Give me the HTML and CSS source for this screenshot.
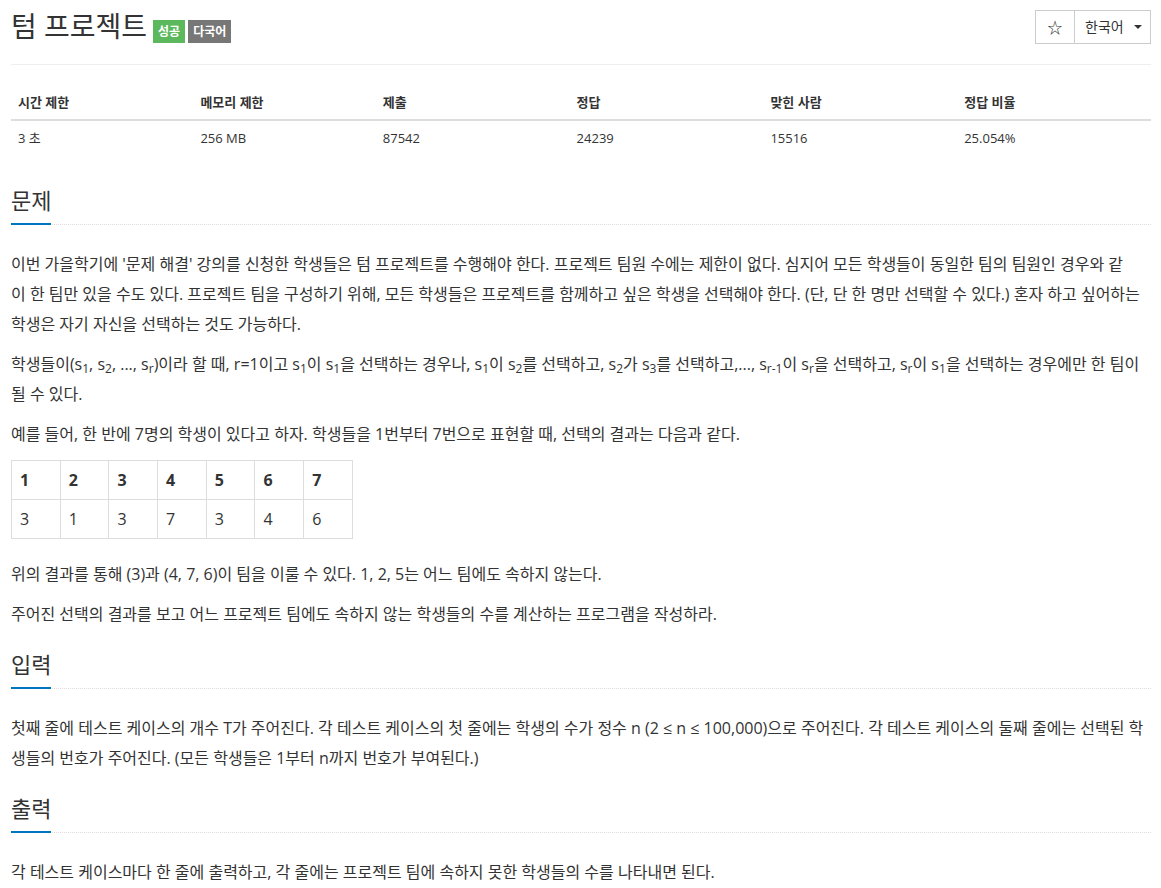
FILE: index.html
```html
<!DOCTYPE html>
<html lang="ko">
<head>
<meta charset="utf-8">
<title>텀 프로젝트</title>
<link rel="stylesheet" href="styles.css">
</head>
<body>
<div class="page">
  <div class="page-header">
    <h1 class="title">텀 프로젝트 <span class="label label-success">성공</span><span class="label label-default">다국어</span></h1>
    <div class="btn-group">
      <div class="btn btn-star">☆</div>
      <div class="btn btn-lang">한국어 <span class="caret"></span></div>
    </div>
  </div>

  <table class="stats">
    <thead>
      <tr><th class="c1">시간 제한</th><th class="c1">메모리 제한</th><th class="c2">제출</th><th class="c2">정답</th><th class="c2">맞힌 사람</th><th>정답 비율</th></tr>
    </thead>
    <tbody>
      <tr><td>3 초 </td><td>256 MB</td><td>87542</td><td>24239</td><td>15516</td><td>25.054%</td></tr>
    </tbody>
  </table>

  <section class="section">
    <div class="headline"><h2>문제</h2></div>
    <div class="text">
      <p>이번 가을학기에 '문제 해결' 강의를 신청한 학생들은 텀 프로젝트를 수행해야 한다. 프로젝트 팀원 수에는 제한이 없다. 심지어 모든 학생들이 동일한 팀의 팀원인 경우와 같<br>이 한 팀만 있을 수도 있다. 프로젝트 팀을 구성하기 위해, 모든 학생들은 프로젝트를 함께하고 싶은 학생을 선택해야 한다. (단, 단 한 명만 선택할 수 있다.) 혼자 하고 싶어하는 학생은 자기 자신을 선택하는 것도 가능하다.</p>
      <p>학생들이(s<sub>1</sub>, s<sub>2</sub>, ..., s<sub>r</sub>)이라 할 때, r=1이고 s<sub>1</sub>이 s<sub>1</sub>을 선택하는 경우나, s<sub>1</sub>이 s<sub>2</sub>를 선택하고, s<sub>2</sub>가 s<sub>3</sub>를 선택하고,..., s<sub>r-1</sub>이 s<sub>r</sub>을 선택하고, s<sub>r</sub>이 s<sub>1</sub>을 선택하는 경우에만 한 팀이 될 수 있다.</p>
      <p>예를 들어, 한 반에 7명의 학생이 있다고 하자. 학생들을 1번부터 7번으로 표현할 때, 선택의 결과는 다음과 같다.</p>
      <table class="grid">
        <thead>
          <tr><th>1</th><th>2</th><th>3</th><th>4</th><th>5</th><th>6</th><th>7</th></tr>
        </thead>
        <tbody>
          <tr><td>3</td><td>1</td><td>3</td><td>7</td><td>3</td><td>4</td><td>6</td></tr>
        </tbody>
      </table>
      <p>위의 결과를 통해 (3)과 (4, 7, 6)이 팀을 이룰 수 있다. 1, 2, 5는 어느 팀에도 속하지 않는다.</p>
      <p>주어진 선택의 결과를 보고 어느 프로젝트 팀에도 속하지 않는 학생들의 수를 계산하는 프로그램을 작성하라.</p>
    </div>
  </section>

  <section class="section">
    <div class="headline"><h2>입력</h2></div>
    <div class="text">
      <p>첫째 줄에 테스트 케이스의 개수 T가 주어진다. 각 테스트 케이스의 첫 줄에는 학생의 수가 정수 n (2 ≤ n ≤ 100,000)으로 주어진다. 각 테스트 케이스의 둘째 줄에는 선택된 학생들의 번호가 주어진다. (모든 학생들은 1부터 n까지 번호가 부여된다.)</p>
    </div>
  </section>

  <section class="section">
    <div class="headline"><h2>출력</h2></div>
    <div class="text">
      <p>각 테스트 케이스마다 한 줄에 출력하고, 각 줄에는 프로젝트 팀에 속하지 못한 학생들의 수를 나타내면 된다.</p>
    </div>
  </section>
</div>
</body>
</html>
```

FILE: styles.css
```css
* { box-sizing: border-box; }
html, body { margin: 0; padding: 0; background: #fff; }
body {
  font-family: "Open Sans", "Noto Sans CJK KR", sans-serif;
  color: #333;
  font-size: 14px;
  line-height: 1.42857;
}
.page { padding: 0 10px 0 11px; }

.page-header {
  display: flex;
  justify-content: space-between;
  align-items: flex-start;
  padding-top: 8px;
  height: 65px;
  border-bottom: 1px solid #eee;
}
.title {
  margin: 0;
  font-size: 28px;
  font-weight: 400;
  line-height: 36px;
  color: #333;
  display: flex;
  align-items: center;
}
.label {
  display: inline-block;
  color: #fff;
  font-size: 12px;
  font-weight: 700;
  line-height: 13px;
  padding: 5px 5px;
  margin-top: 11px;
  border-radius: 0;
}
.label-success { background: #5cb85c; margin-left: 6px; }
.label-default { background: #777; margin-left: 3px; }

.btn-group { display: flex; margin-top: 2px; }
.btn {
  height: 34px;
  border: 1px solid #ccc;
  background: #fff;
  font-size: 14px;
  line-height: 32px;
  color: #333;
  padding: 0 12px;
}
.btn-star { width: 40px; text-align: center; font-size: 15px; padding: 0; margin-left: 1px; }
.btn-lang { margin-left: -1px; width: 77px; padding: 0 0 0 10px; display: flex; align-items: center; gap: 10px; }
.caret {
  display: inline-block;
  width: 0; height: 0;
  border-top: 4px solid #333;
  border-left: 4px solid transparent;
  border-right: 4px solid transparent;
}

.stats {
  width: 100%;
  border-collapse: collapse;
  margin-top: 20px;
  margin-bottom: 20px;
  font-size: 13px;
}
.stats th, .stats td {
  text-align: left;
  padding: 8px 7px;
  line-height: 18px;
}
.stats th { font-weight: 700; border-bottom: 2px solid #ddd; }
.stats th.c1 { width: 16%; }
.stats th.c2 { width: 17%; }

.section { margin-top: 0; }
.headline { border-bottom: 1px dotted #ddd; }
.headline h2 {
  display: inline-block;
  margin: 10px 0 -1px;
  font-size: 22px;
  font-weight: 400;
  line-height: 30px;
  padding-bottom: 8px;
  border-bottom: 2px solid #0076c0;
  color: #333;
}
.text { padding-top: 24px; }
.text p {
  margin: 0 0 10px;
  font-size: 16px;
  line-height: 30px;
}
sub {
  font-size: 75%;
  line-height: 0;
  position: relative;
  vertical-align: baseline;
  bottom: -0.25em;
}

.grid {
  border-collapse: collapse;
  border: 1px solid #ddd;
  margin-top: 11px;
  margin-bottom: 20px;
  font-size: 16px;
}
.grid th, .grid td {
  border: 1px solid #ddd;
  padding: 8px;
  line-height: 22px;
  text-align: left;
  width: 48.7px;
}
.grid th { font-weight: 700; }
```
